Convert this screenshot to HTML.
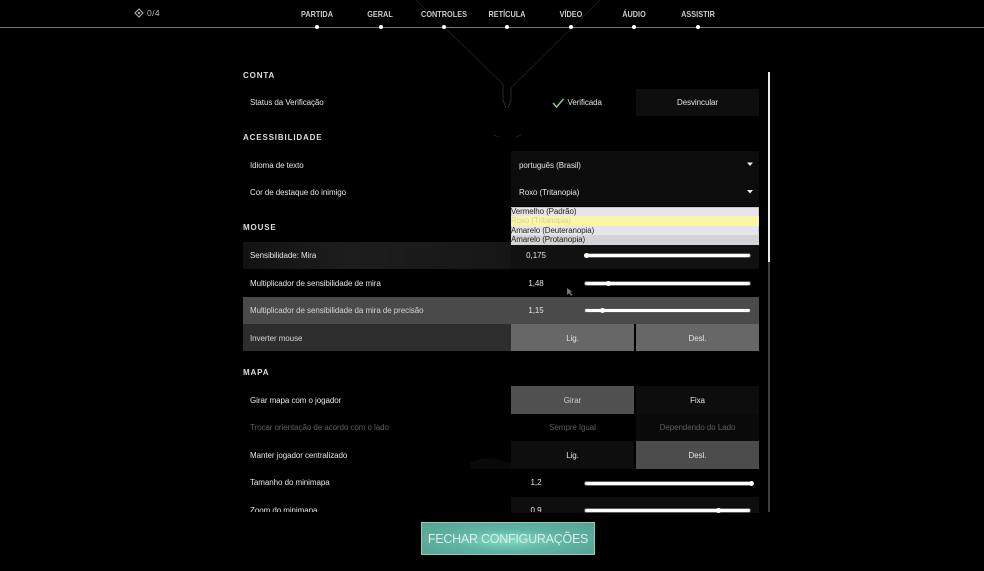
<!DOCTYPE html>
<html lang="pt"><head><meta charset="utf-8"><title>Configurações</title>
<style>
html,body{margin:0;padding:0;background:#000}
#p{position:relative;width:984px;height:571px;overflow:hidden;background:#000;font-family:"Liberation Sans",sans-serif;color:#e4e4e4}
#p div{position:absolute;box-sizing:border-box}
.t{white-space:nowrap;font-size:8px;line-height:12px;letter-spacing:-.07px;margin-top:1px;filter:blur(.25px)}
.c{text-align:center}
.h{font-size:8px;font-weight:bold;letter-spacing:.85px;line-height:12px;margin-top:1px;white-space:nowrap;color:#ddd;left:243px;filter:blur(.25px)}
.n{font-size:8.500px;font-weight:bold;line-height:12px;top:8px;text-align:center;width:80px;color:#ccc;transform:scaleX(.86);filter:blur(.25px)}
.d{width:4px;height:4px;border-radius:50%;background:#fff;top:25px}
.tr{height:3px;background:#fff;border-radius:2px;box-shadow:0 0 0 1px #5a5a5a;left:585px;width:165px}
.k{width:5px;height:5px;border-radius:50%;background:#fff}
.o{left:511px;width:248px;height:9.500px;color:#222;font-size:8px;line-height:10px;letter-spacing:-.1px;white-space:nowrap;filter:blur(.2px)}
</style></head><body><div id="p">

<svg style="position:absolute;left:0;top:0" width="984" height="571">
<g fill="none" stroke="#202020" stroke-width=".8">
<path d="M416 0L503 84M600 0L511 88"/>
<path d="M503 84V100L506 108M511 88V100L508 108" stroke="#333"/>
<path d="M494 135L499 137M516 137L521 135" stroke="#222"/>
</g>
<path d="M135 13l4-4 4 4-4 4z" fill="none" stroke="#bbb" stroke-width="1"/><path d="M137.500 13l1.500-1.500 1.500 1.500-1.500 1.500z" fill="#bbb"/>
<path d="M553 103l3.500 4 7-8" fill="none" stroke="#8fce7c" stroke-width="1.500"/>
<path d="M470 463q18-9 36-1l6 1v6h-42z" fill="#090909"/>
</svg>

<div class="t" style="left:147px;top:6px;font-size:8.500px;letter-spacing:.4px;color:#bbb">0/4</div>
<div style="left:0;top:26.500px;width:984px;height:1px;background:#777"></div>
<div class="n" style="left:277px">PARTIDA</div><div class="d" style="left:315px"></div>
<div class="n" style="left:340px">GERAL</div><div class="d" style="left:379px"></div>
<div class="n" style="left:404px">CONTROLES</div><div class="d" style="left:442px"></div>
<div class="n" style="left:467px">RETÍCULA</div><div class="d" style="left:505px"></div>
<div class="n" style="left:531px">VÍDEO</div><div class="d" style="left:569px"></div>
<div class="n" style="left:594px">ÁUDIO</div><div class="d" style="left:632px"></div>
<div class="n" style="left:658px">ASSISTIR</div><div class="d" style="left:696px"></div>

<div style="left:768px;top:72px;width:2px;height:190px;background:#e8e8e8"></div>
<div style="left:768px;top:262px;width:2px;height:250px;background:#3d3d3d"></div>

<div class="h" style="top:69px">CONTA</div>
<div class="t" style="left:250px;top:96px">Status da Verificação</div>
<div class="t" style="left:567.500px;top:96px">Verificada</div>
<div style="left:636px;top:89px;width:123px;height:27px;background:#0e0e0e"></div>
<div class="t c" style="left:636px;width:123px;top:96px">Desvincular</div>

<div class="h" style="top:131px">ACESSIBILIDADE</div>
<div style="left:511px;top:151px;width:248px;height:55px;background:#0c0c0c"></div>
<div class="t" style="left:250px;top:159px">Idioma de texto</div>
<div class="t" style="left:519px;top:159px">português (Brasil)</div>
<div class="t" style="left:250px;top:186px">Cor de destaque do inimigo</div>
<div class="t" style="left:519px;top:186px">Roxo (Tritanopia)</div>

<div class="h" style="top:221px">MOUSE</div>
<div style="left:243px;top:241.500px;width:268px;height:27.500px;background:linear-gradient(90deg,#121212,#1d1d1d 40%,#161616)"></div>
<div style="left:511px;top:241.500px;width:248px;height:27.500px;background:#111"></div>
<div style="left:243px;top:296.500px;width:516px;height:27.500px;background:#4a4a4a"></div>
<div style="left:243px;top:324px;width:268px;height:27px;background:#2d2d2d"></div>
<div style="left:511px;top:324px;width:123px;height:27px;background:#676767"></div>
<div style="left:636px;top:324px;width:123px;height:27px;background:#676767"></div>

<div class="t" style="left:250px;top:249px">Sensibilidade: Mira</div>
<div class="t" style="left:250px;top:277px">Multiplicador de sensibilidade de mira</div>
<div class="t" style="left:250px;top:304px;color:#d4d4d4">Multiplicador de sensibilidade da mira de precisão</div>
<div class="t" style="left:250px;top:332px;color:#d4d4d4">Inverter mouse</div>
<div class="t c" style="left:511px;width:50px;top:249px">0,175</div>
<div class="t c" style="left:511px;width:50px;top:277px">1,48</div>
<div class="t c" style="left:511px;width:50px;top:304px">1,15</div>
<div class="t c" style="left:511px;width:123px;top:332px">Lig.</div>
<div class="t c" style="left:636px;width:123px;top:332px">Desl.</div>
<div class="tr" style="top:254px"></div><div class="k" style="left:584px;top:253px"></div>
<div class="tr" style="top:281.500px"></div><div class="k" style="left:606px;top:280.500px"></div>
<div class="tr" style="top:309px"></div><div class="k" style="left:600px;top:308px"></div>

<div style="left:511px;top:206.500px;width:248px;height:38px;background:#e6e6e8;box-shadow:inset 0 0 0 .5px #aaa"></div>
<div style="left:511px;top:216px;width:248px;height:9.500px;background:#fbf6a4"></div>
<div style="left:511px;top:235px;width:248px;height:9.500px;background:#d4d4d8"></div>
<div class="o" style="top:206.500px">Vermelho (Padrão)</div>
<div class="o" style="top:216px;color:#d8d49a">Roxo (Tritanopia)</div>
<div class="o" style="top:225.500px">Amarelo (Deuteranopia)</div>
<div class="o" style="top:235px">Amarelo (Protanopia)</div>

<div class="h" style="top:366px">MAPA</div>
<div style="left:511px;top:386px;width:123px;height:27.500px;background:#505050"></div>
<div style="left:636px;top:386px;width:123px;height:27.500px;background:#0d0d0d"></div>
<div style="left:636px;top:413.500px;width:123px;height:27.500px;background:#0a0a0a"></div>
<div style="left:511px;top:441px;width:123px;height:27.500px;background:#0e0e0e"></div>
<div style="left:636px;top:441px;width:123px;height:27.500px;background:#4c4c4c"></div>
<div style="left:511px;top:496.500px;width:248px;height:16px;background:#0e0e0e"></div>

<div class="t" style="left:250px;top:394px">Girar mapa com o jogador</div>
<div class="t" style="left:250px;top:421px;color:#5e5e5e">Trocar orientação de acordo com o lado</div>
<div class="t" style="left:250px;top:449px">Manter jogador centralizado</div>
<div class="t" style="left:250px;top:476px">Tamanho do minimapa</div>
<div style="left:240px;top:500px;width:340px;height:12px;overflow:hidden"><div class="t" style="left:10px;top:4px">Zoom do minimapa</div><div class="t c" style="left:271px;width:50px;top:4px">0,9</div></div>

<div class="t c" style="left:511px;width:123px;top:394px;color:#ccc">Girar</div>
<div class="t c" style="left:636px;width:123px;top:394px">Fixa</div>
<div class="t c" style="left:511px;width:123px;top:421px;color:#5e5e5e">Sempre Igual</div>
<div class="t c" style="left:636px;width:123px;top:421px;color:#5e5e5e">Dependendo do Lado</div>
<div class="t c" style="left:511px;width:123px;top:449px">Lig.</div>
<div class="t c" style="left:636px;width:123px;top:449px">Desl.</div>
<div class="t c" style="left:511px;width:50px;top:476px">1,2</div>
<div class="tr" style="top:481.500px"></div><div class="k" style="left:749px;top:480.500px"></div>
<div class="tr" style="top:509px"></div><div class="k" style="left:716px;top:507.500px"></div>

<div style="left:421px;top:522px;width:174px;height:33px;background:radial-gradient(ellipse at 50% 55%,#7fdcc4 0,#5fb5a2 45%,#55a090 100%);border:1px solid #9cc5bc"></div>
<div style="left:421px;top:523px;width:174px;height:33px;line-height:33px;text-align:center;font-size:12.500px;letter-spacing:-.25px;color:#e0ece8;white-space:nowrap;filter:blur(.25px)">FECHAR CONFIGURAÇÕES</div>

<svg style="position:absolute;left:0;top:0" width="984" height="571">
<path d="M747 162.500h6l-3 3.500zM747 190h6l-3 3.500z" fill="#eee"/>
<path d="M567 288v7l1.800-1.600 2.700 2.400 1-.8-2.400-2.600 2-.8z" fill="#777"/>
</svg>

</div></body></html>
